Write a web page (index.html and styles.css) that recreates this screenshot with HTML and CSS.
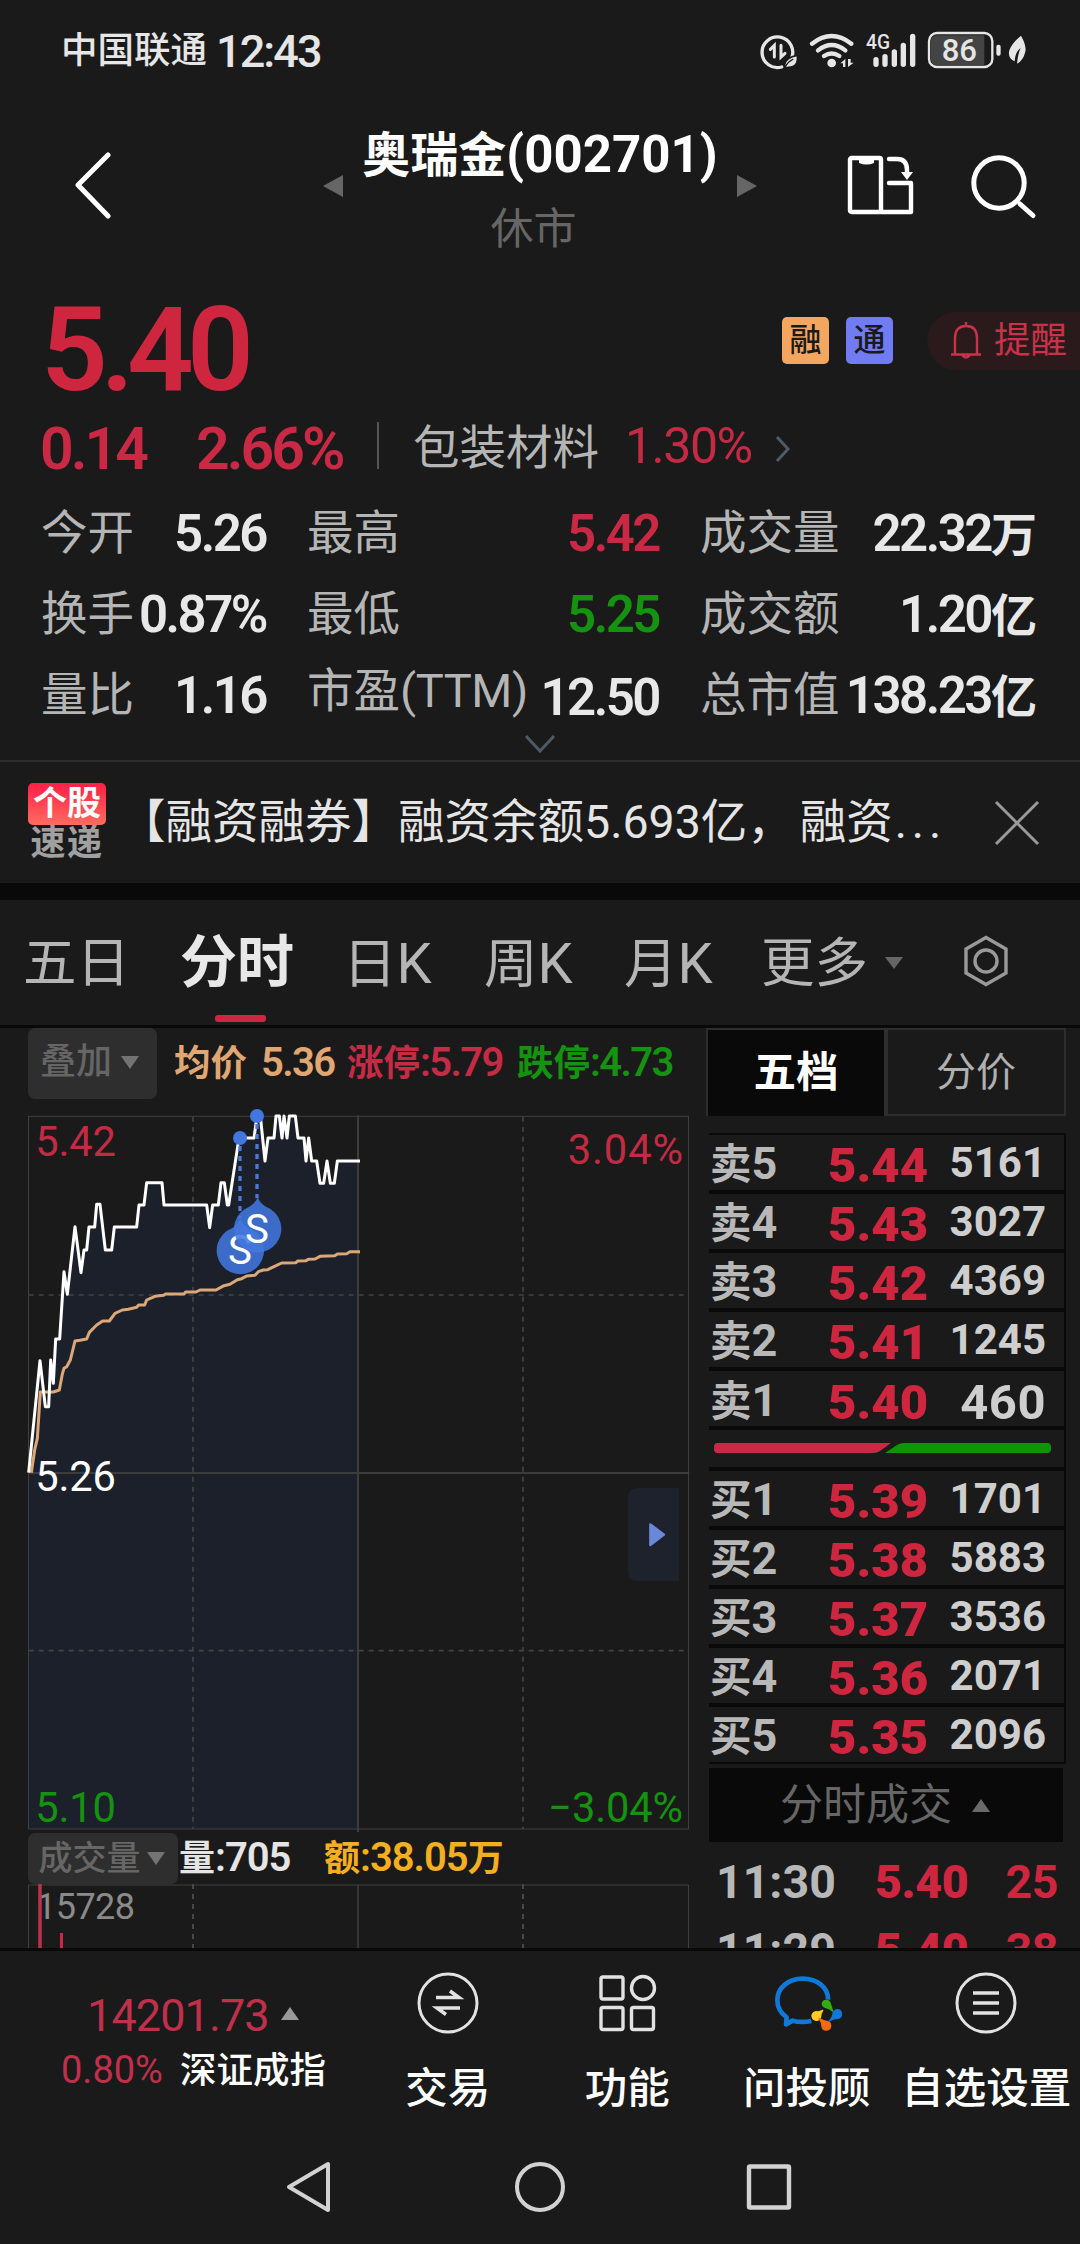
FILE: index.html
```html
<!DOCTYPE html>
<html lang="zh-CN">
<head>
<meta charset="utf-8">
<title>奥瑞金(002701)</title>
<link rel="stylesheet" href="styles.css">
</head>
<body>
<div class="statusbar">
  <span class="carrier">中国联通</span><span class="clock">12:43</span>
  <svg class="status-icons" width="270" height="44" viewBox="0 0 810 132">
    <g fill="none" stroke="#e6e6e6" stroke-width="10" stroke-linecap="round">
      <path d="M91 115A46 46 0 1 1 120 90" transform="translate(-14 -7)"/>
      <path d="M50 52L62 40V75M82 40V75L94 64" stroke-width="9" transform="translate(-7 3)"/>
    </g>
    <path d="M124 73Q128 108 98 109Q84 112 86 101Q88 80 124 73Z" fill="#e6e6e6" stroke="#1a1a1a" stroke-width="5"/>
    <path d="M88 107Q96 92 112 84" stroke="#1a1a1a" stroke-width="4" fill="none"/>
    <g fill="none" stroke="#e6e6e6" stroke-width="13" stroke-linecap="round">
      <path d="M168 38Q227 -8 286 38"/><path d="M186 58Q227 26 268 58"/><path d="M204 75Q227 60 250 75"/>
    </g>
    <circle cx="227" cy="96" r="13" fill="#e6e6e6"/>
    <path d="M253 97L268 84V108H261V97ZM276 84V108L293 95H284V84Z" fill="#e6e6e6"/>
    <text x="330" y="55" class="net" textLength="72" lengthAdjust="spacingAndGlyphs">4G</text>
    <g stroke="#e6e6e6" stroke-width="16" stroke-linecap="round">
      <path d="M360 86V100M387 77V100M415 63V100M442 43V100M470 16V100"/>
    </g>
    <rect x="519" y="6" width="190" height="102" rx="24" fill="#1a1a1a" stroke="#e6e6e6" stroke-width="7"/>
    <path d="M543 13H685V102H543Q525 102 525 84V31Q525 13 543 13Z" fill="#444"/>
    <text x="557" y="91" class="batt" textLength="106" lengthAdjust="spacingAndGlyphs">86</text>
    <rect x="721" y="41" width="13" height="33" rx="6" fill="#e6e6e6"/>
    <path d="M795 14Q812 44 808 62Q802 88 783 98Q786 68 794 50Q777 64 776 91Q754 82 760 58Q768 36 795 14Z" fill="#e6e6e6"/>
  </svg>
</div>

<header class="header">
  <svg class="back" width="40" height="68" viewBox="0 0 40 68"><path d="M35 4L5 34L35 65" fill="none" stroke="#fff" stroke-width="5" stroke-linecap="round" stroke-linejoin="round"/></svg>
  <i class="tri tri-left"></i>
  <div class="title">
    <h1>奥瑞金<span>(002701)</span></h1>
    <p>休市</p>
  </div>
  <i class="tri tri-right"></i>
  <svg class="fold" width="67" height="61" viewBox="0 0 67 61">
    <g fill="none" stroke="#fff" stroke-width="4.400" stroke-linejoin="round" stroke-linecap="round">
      <rect x="3" y="3" width="31" height="54" rx="1.500"/><path d="M42 28H64V57H34M42 4H50Q60 4 60 15V20"/>
    </g>
    <path d="M12 3H27V8Q19.500 11 12 8ZM54 17H66L60 25Z" fill="#fff"/>
  </svg>
  <svg class="search" width="66" height="66" viewBox="0 0 66 66"><g fill="none" stroke="#fff" stroke-width="5" stroke-linecap="round"><circle cx="28" cy="29" r="25.200"/><path d="M49 50L62 61.500"/></g></svg>
</header>

<section class="price">
  <strong>5.40</strong>
  <b class="tag tag-r">融</b><b class="tag tag-t">通</b>
  <div class="alert">
    <svg width="30" height="38" viewBox="0 0 30 38"><g fill="none" stroke="#c93248" stroke-width="2.400"><path d="M4 32V16Q4 4 15 4Q26 4 26 16V32M0 32.500H30M15 0V4M11 33Q15 38 19 33"/></g></svg>
    <span>提醒</span>
  </div>
</section>

<section class="change">
  <b class="chg">0.14</b><b class="pct">2.66%</b><i class="bar"></i>
  <span class="sector">包装材料</span><span class="sector-pct">1.30%</span>
  <svg width="18" height="30" viewBox="0 0 18 30"><path d="M3 3L14 15L3 27" fill="none" stroke="#4e5a66" stroke-width="3"/></svg>
</section>

<section class="stats">
  <div><span>今开</span><b>5.26</b></div>
  <div><span>最高</span><b class="up">5.42</b></div>
  <div><span>成交量</span><b>22.32<em>万</em></b></div>
  <div><span>换手</span><b>0.87%</b></div>
  <div><span>最低</span><b class="down">5.25</b></div>
  <div><span>成交额</span><b>1.20<em>亿</em></b></div>
  <div><span>量比</span><b>1.16</b></div>
  <div class="pe"><span>市盈<u>(TTM)</u></span><b>12.50</b></div>
  <div><span>总市值</span><b>138.23<em>亿</em></b></div>
</section>
<div class="expand"><svg width="32" height="20" viewBox="0 0 32 20"><path d="M2 2L16 17L30 2" fill="none" stroke="#4e5a66" stroke-width="3"/></svg></div>

<section class="news">
  <div class="badge"><b>个股</b><i>速递</i></div>
  <p>【融资融券】融资余额5.693亿，<u>融资</u><span>...</span></p>
  <svg width="46" height="46" viewBox="0 0 46 46"><path d="M2 2L44 44M44 2L2 44" stroke="#999" stroke-width="3" fill="none"/></svg>
</section>
<div class="band"></div>

<nav class="periods">
  <span>五日</span><b>分时</b><span class="day">日<u>K</u></span><span class="week">周<u>K</u></span><span class="month">月<u>K</u></span><span class="more">更多</span>
  <i></i>
  <svg width="44" height="52" viewBox="0 0 44 52"><g fill="none" stroke="#999" stroke-width="3.400"><path d="M22 2.500L42 14V38L22 49.500L2 38V14Z"/><circle cx="22" cy="26" r="11"/></g></svg>
</nav>

<main class="main">
  <div class="charts">
    <div class="legend">
      <button class="pill">叠加<i></i></button>
      <span class="avg">均价<u>5.36</u></span><span class="limit-up">涨停<u>:5.79</u></span><span class="limit-down">跌停<u>:4.73</u></span>
    </div>
    <svg class="trend" width="700" height="732" viewBox="0 240 2100 2196">
      <path class="fill" d="M86 1358 120 1022 136 1160H146L152 1020 160 1090 167 957H179L192 755 202 823 225 620 243 758 252 690H260L267 621H284L290 553H300L316 690H335L343 621H410L417 555H432L440 488H486L492 555H620L629 623 638 555H655L663 488H673L682 555H686L717 354H762L771 288H781L795 423 804 354H822L828 288H838L846 354 852 288 861 354 868 288H886L894 354H912L918 423 926 354 935 423H950L960 490H971L981 423 991 490H1003L1012 423H1074V2428H86Z"/>
      <path class="dash" d="M579 290V2428M1569 290V2428M86 825H2065M86 1892H2065"/>
      <path class="solid" d="M1074 286V2436M86 1359H2068"/>
      <rect class="frame" x="85.500" y="289" width="1980" height="2138"/>
      <polyline class="avg-line" points="94,1358 104,1290 112,1255 121,1116 160,1116 178,1110 187,1062 192,1045 200,1040 211,1020 225,963 240,961 260,957 268,937 290,915 308,903 328,903 345,880 367,870 385,868 410,862 416,855 434,855 440,840 465,829 490,826 497,822 552,822 557,816 588,816 600,810 648,810 672,797 690,793 712,779 725,776 740,768 765,766 775,755 790,750 803,749 822,740 845,729 888,728 893,723 918,722 925,718 945,717 960,709 1004,707 1012,702 1040,701 1050,695 1080,695"/>
      <polyline class="price-line" points="86,1358 120,1022 136,1160 146,1160 152,1020 160,1090 167,957 179,957 192,755 202,823 225,620 243,758 252,690 260,690 267,621 284,621 290,553 300,553 316,690 335,690 343,621 410,621 417,555 432,555 440,488 486,488 492,555 620,555 629,623 638,555 655,555 663,488 673,488 682,555 686,555 717,354 762,354 771,288 781,288 795,423 804,354 822,354 828,288 838,288 846,354 852,288 861,354 868,288 886,288 894,354 912,354 918,423 926,354 935,423 950,423 960,490 971,490 981,423 991,490 1003,490 1012,423 1080,423"/>
      <path class="drop" d="M720 378V595M771 312V535"/>
      <g class="mark"><circle cx="720" cy="354" r="21"/><circle cx="771" cy="288" r="21"/></g>
      <g class="balloon">
        <path d="M721 598Q732 618 746 625A71 71 0 1 1 696 625Q710 618 721 598Z"/><text x="684" y="733">S</text>
        <path d="M773 533Q784 553 798 560A71 71 0 1 1 748 560Q762 553 773 533Z"/><text x="735" y="668">S</text>
      </g>
      <text class="lab up" x="106" y="407" textLength="242">5.42</text>
      <text class="lab" x="106" y="1412" textLength="242">5.26</text>
      <text class="lab down" x="106" y="2405" textLength="242">5.10</text>
      <text class="lab up" x="1703" y="433" textLength="346">3.04%</text>
      <text class="lab down" x="1645" y="2405" textLength="404">−3.04%</text>
      <path d="M1914 1404H2037V1683H1914Q1884 1683 1884 1653V1434Q1884 1404 1914 1404Z" fill="#1e222c"/>
      <path d="M1951 1513L1992 1544 1951 1575Z" fill="#6b87d8" stroke="#6b87d8" stroke-width="7" stroke-linejoin="round"/>
    </svg>
    <div class="vol-head"><button class="pill">成交量<i></i></button><span class="vol">量<u>:705</u></span><span class="amt">额<u>:38.05</u>万</span></div>
    <svg class="volume" width="700" height="64" viewBox="0 0 700 64">
      <path d="M28.500 64V1H688.500V64" fill="none" stroke="#404040"/><path d="M358 0V64" stroke="#353535" stroke-width="2"/>
      <path d="M193 0V64M523 0V64" stroke="#484848" stroke-width="2" stroke-dasharray="5 5"/>
      <text x="36" y="35" textLength="99">15728</text>
      <path d="M40 0V64" stroke="#b8334a" stroke-width="3.600"/><path d="M61.500 49V64" stroke="#c92944" stroke-width="3"/>
    </svg>
  </div>

  <aside class="book">
    <div class="book-tabs"><b>五档</b><span>分价</span></div>
    <div class="levels">
      <div><span>卖<u>5</u></span><b>5.44</b><em>5161</em></div>
      <div><span>卖<u>4</u></span><b>5.43</b><em>3027</em></div>
      <div><span>卖<u>3</u></span><b>5.42</b><em>4369</em></div>
      <div><span>卖<u>2</u></span><b>5.41</b><em>1245</em></div>
      <div><span>卖<u>1</u></span><b>5.40</b><em class="short">460</em></div>
      <svg class="ratio" width="355" height="37" viewBox="0 0 355 37">
        <path d="M8.500 13H182L171 21Q168 23 164 23H8.500Q5 23 5 19V17Q5 13 8.500 13Z" fill="#c92944"/>
        <path d="M176 23L188 15Q191 13 195 13H338Q342 13 342 17V19Q342 23 338 23Z" fill="#0c9605"/>
      </svg>
      <div><span>买<u>1</u></span><b>5.39</b><em>1701</em></div>
      <div><span>买<u>2</u></span><b>5.38</b><em>5883</em></div>
      <div><span>买<u>3</u></span><b>5.37</b><em>3536</em></div>
      <div><span>买<u>4</u></span><b>5.36</b><em>2071</em></div>
      <div><span>买<u>5</u></span><b>5.35</b><em>2096</em></div>
    </div>
    <div class="ticks-head">分时成交<i></i></div>
    <div class="ticks">
      <div><span>11:30</span><b>5.40</b><em>25</em></div>
      <div><span>11:29</span><b>5.40</b><em>38</em></div>
    </div>
  </aside>
</main>

<nav class="bottom">
  <div class="index">
    <p class="idx-val">14201.73<i></i></p>
    <p class="idx-name"><span>0.80%</span>深证成指</p>
  </div>
  <div class="item">
    <svg width="64" height="64" viewBox="0 0 64 64"><g fill="none" stroke="#e2e2e2"><circle cx="32" cy="32" r="29" stroke-width="3"/><path d="M20 26.500H43L34 20M44 37H21L30 43.500" stroke-width="3.500"/></g></svg>
    <span>交易</span>
  </div>
  <div class="item">
    <svg width="64" height="64" viewBox="0 0 64 64"><g fill="none" stroke="#e2e2e2" stroke-width="3.400"><rect x="6" y="6" width="22" height="22" rx="2"/><circle cx="48" cy="17" r="11.500"/><rect x="6" y="36.500" width="22" height="22" rx="2"/><rect x="36.500" y="36.500" width="22" height="22" rx="2"/></g></svg>
    <span>功能</span>
  </div>
  <div class="item">
    <svg width="70" height="64" viewBox="0 0 210 192">
      <path d="M168 86C170 50 135 23 92 23C48 23 16 51 16 88C16 110 27 127 44 139L42 160L62 149Q88 156 118 150" fill="none" stroke="#1079d8" stroke-width="14" stroke-linejoin="round"/>
      <g stroke-width="4" stroke-linejoin="round">
        <path d="M151 97A12 12 0 0 1 174 96Q178 108 182 120Q172 112 160 109A12 12 0 0 1 151 97Z" fill="#34ad12" stroke="#34ad12"/>
        <path d="M152 118Q145 130 146 136A13 13 0 1 1 132 122Q142 124 152 118Z" fill="#ffce1f" stroke="#ffce1f"/>
        <path d="M141 142Q154 150 164 151A13 13 0 1 1 150 166Q150 154 141 142Z" fill="#f26a12" stroke="#f26a12"/>
        <path d="M171 151Q180 144 183 130A13 13 0 1 1 196 142Q182 142 171 151Z" fill="#1079d8" stroke="#1079d8"/>
      </g>
    </svg>
    <span>问投顾</span>
  </div>
  <div class="item">
    <svg width="64" height="64" viewBox="0 0 64 64"><g fill="none" stroke="#e2e2e2"><circle cx="32" cy="32" r="29" stroke-width="3"/><path d="M19 22H45M19 32H45M19 42H45" stroke-width="3.500"/></g></svg>
    <span>自选设置</span>
  </div>
</nav>

<footer class="sysnav">
  <svg width="48" height="54" viewBox="0 0 48 54"><path d="M43 4V50L4 27Z" fill="none" stroke="#d2d2d2" stroke-width="4" stroke-linejoin="round"/></svg>
  <svg width="52" height="52" viewBox="0 0 52 52"><circle cx="26" cy="26" r="23" fill="none" stroke="#d2d2d2" stroke-width="4"/></svg>
  <svg width="46" height="48" viewBox="0 0 46 48"><rect x="3" y="3.500" width="40" height="41" rx="1" fill="none" stroke="#d2d2d2" stroke-width="4.400"/></svg>
</footer>
</body>
</html>
```
FILE: styles.css
```css
* { box-sizing: border-box; margin: 0; padding: 0; }
body {
  width: 1080px; height: 2244px; overflow: hidden;
  background: #1a1a1a; color: #e5e5e5;
  font-family: Roboto, "Noto Sans CJK SC", sans-serif;
  line-height: 1;
}
i, em { font-style: normal; }
u { text-decoration: none; }
span, b, strong, p, h1 { white-space: nowrap; }
svg { display: block; flex: none; }
button { border: 0; font: inherit; }

.statusbar { display: flex; align-items: center; height: 100px; padding: 2px 0 0 61px; color: #e6e6e6; }
.carrier { font-size: 36.500px; font-weight: 500; width: 155px; padding-top: 1px; }
.clock { font-size: 45px; font-weight: 500; letter-spacing: -1.900px; }
.status-icons { margin: 3px 54px 0 auto; }
.net { font-size: 58px; font-weight: 500; fill: #e6e6e6; }
.batt { font-size: 94px; font-weight: 500; fill: #e6e6e6; }

.header { display: flex; align-items: flex-start; height: 180px; padding-left: 73px; }
.back { margin-top: 51px; }
.tri { flex: none; border: solid transparent; border-width: 11px 0; margin-top: 75px; }
.tri-left { border-right: 20px solid #666; margin-left: 210px; }
.tri-right { border-left: 20px solid #666; }
.title { width: 394px; padding-top: 28px; text-align: center; }
.title h1 { font-size: 48px; font-weight: 700; color: #fff; line-height: 54px; }
.title h1 span { font-size: 51px; }
.title p { margin: 22px 13px 0 0; font-size: 43px; line-height: 48px; color: #666; }
.fold { margin: 55px 0 0 90px; }
.search { margin: 54px 0 0 57px; }

.price { display: flex; height: 125px; padding-left: 41px; }
.price strong { width: 741px; margin-top: 12px; font-size: 117px; font-weight: 600; line-height: 117px; letter-spacing: -7px; color: #cf2640; }
.tag { width: 47px; height: 47px; margin: 37px 17px 0 0; border-radius: 5px; font-size: 32px; font-weight: 500; line-height: 47px; text-align: center; color: #1a1a1a; }
.tag-r { background: #f3a65f; }
.tag-t { background: #727cf2; }
.alert { display: flex; align-items: center; width: 153px; height: 58px; margin: 32px 0 0 17px; padding-left: 24px; border-radius: 29px 0 0 29px; background: #2b1a1c; color: #c93248; }
.alert span { margin-left: 13px; font-size: 36.500px; }

.change { display: flex; align-items: center; height: 87px; padding-left: 40px; }
.chg, .pct { font-size: 59px; font-weight: 600; letter-spacing: -3px; color: #c92944; }
.chg { width: 156px; }
.pct { width: 181px; }
.bar { width: 2px; height: 47px; margin-top: -6px; background: #555; }
.sector { width: 212px; margin-left: 34px; font-size: 46.500px; color: #b5b5b5; }
.sector-pct { width: 149px; font-size: 50px; letter-spacing: -1.500px; color: #c32b45; margin-top: -6px; }

.stats { display: grid; grid-template-columns: 225px 352px 337px; grid-auto-rows: 81px; column-gap: 41px; padding-left: 41px; }
.stats div { display: flex; align-items: center; justify-content: space-between; padding-top: 2px; }
.stats span { font-size: 46.500px; color: #b5b5b5; }
.stats b { font-size: 51px; font-weight: 600; letter-spacing: -2.500px; color: #e8e8e8; }
.stats em { font-size: 46px; letter-spacing: 0; }
.stats .up { color: #c92944; }
.stats .down { color: #159210; }
.pe span { padding-bottom: 10px; }
.pe b { padding-top: 4px; }
.pe u { font-size: 47px; letter-spacing: -.400px; }
.expand { display: flex; justify-content: center; height: 27px; border-bottom: 2px solid #2c2c2c; }
.expand svg { margin-top: -1px; }

.news { display: flex; align-items: center; height: 121px; padding-left: 28px; }
.badge { display: flex; flex-direction: column; width: 78px; text-align: center; }
.badge b { height: 42px; border-radius: 5px; background: linear-gradient(#ff1f45, #ff6c60); color: #fff; font-size: 34px; line-height: 41px; }
.badge i { font-size: 35px; font-weight: 700; line-height: 38px; letter-spacing: 1.500px; color: #a0a0a0; }
.news p { width: 875px; margin-left: 13px; font-size: 46.500px; color: #e5e5e5; }
.news p u { margin-left: 6px; }
.news p span { margin-left: 2px; letter-spacing: 4.800px; }
.band { height: 17px; background: #090909; }

.periods { display: flex; align-items: center; height: 128px; padding-left: 23px; border-bottom: 3px solid #090909; color: #b5b5b5; font-size: 53.500px; }
.periods span { flex: none; width: 134px; padding-top: 2px; }
.periods b { position: relative; flex: none; width: 163px; margin-left: 23px; font-size: 57px; color: #e8e8e8; }
.periods b::after { content: ""; position: absolute; left: 35px; top: 81px; width: 51px; height: 7px; border-radius: 3px; background: #c92944; }
.periods u { font-size: 56px; }
.periods .day { width: 141px; }
.periods .week { width: 140px; }
.periods .month { width: 137px; }
.periods .more { width: 124px; }
.periods i { border: solid transparent; border-width: 0 9px; border-top: 12px solid #666; }
.periods svg { margin-left: 61px; margin-top: -3px; }

.main { display: grid; grid-template-columns: 706px 360px; height: 920px; overflow: hidden; }
.legend { display: flex; align-items: flex-start; height: 72px; padding-left: 28px; font-size: 36.500px; font-weight: 600; line-height: 70px; }
.legend u, .vol-head u { font-size: 40px; letter-spacing: -1.600px; }
.pill { display: flex; flex: none; align-items: center; justify-content: center; gap: 9px; border-radius: 7px; background: #2e2e2e; color: #666; font-weight: 500; }
.pill i { border: solid transparent; border-width: 0 9px; border-top: 13px solid #737373; }
.legend .pill { width: 129px; height: 71px; padding: 0 6px 3px 0; margin-right: 17px; font-size: 36px; }
.avg { width: 173px; color: #e0a772; }
.avg u { margin-left: 14px; }
.limit-up { width: 170px; color: #c52b45; }
.limit-down { color: #159210; }

.trend .fill { fill: #1c202b; }
.trend path.dash { fill: none; stroke: #444; stroke-width: 5; stroke-dasharray: 15 15; }
.trend path.solid { stroke: #3c3c3c; stroke-width: 6; }
.trend .frame { fill: none; stroke: #404040; stroke-width: 3; }
.trend polyline { fill: none; stroke-linejoin: round; stroke-width: 9; }
.price-line { stroke: #fff; }
.avg-line { stroke: #dca878; }
.drop { stroke: #4c79d8; stroke-width: 10; stroke-dasharray: 15 15; }
.mark { fill: #4377e0; }
.balloon path { fill: #4377e0; fill-opacity: .87; }
.balloon text { fill: #fff; font-size: 121px; }
.lab { fill: #fff; font-size: 125px; }
.lab.up { fill: #c32b45; }
.lab.down { fill: #159210; }

.vol-head { display: flex; align-items: center; height: 52px; padding-left: 28px; font-size: 36px; font-weight: 600; line-height: 52px; }
.vol-head u { letter-spacing: -1px; }
.vol-head .pill { width: 150px; height: 51px; padding-right: 3px; gap: 6px; font-size: 34px; }
.vol { width: 145px; margin-left: 1px; }
.amt { color: #f5ae20; }
.volume text { fill: #8a8a8a; font-size: 36px; }

.book-tabs { display: grid; grid-template-columns: 178px 1fr; height: 88px; border: 2px solid #2e2e2e; text-align: center; line-height: 86px; }
.book-tabs b { background: #090909; color: #fff; font-size: 42.500px; border-right: 2px solid #2e2e2e; }
.book-tabs span { border-left: 2px solid #2e2e2e; font-size: 40px; color: #b0b0b0; }
.levels { display: flex; flex-direction: column; gap: 4px; margin: 17px 0 0 3px; padding: 2px 2px 2px 0; background: #090909; }
.levels div, .ratio { background: #1a1a1a; }
.levels div { display: grid; grid-template-columns: 118px 1fr auto; align-items: center; height: 55px; padding: 0 18px 0 1px; font-weight: 700; }
.levels span { padding-top: 2px; font-size: 41.500px; color: #b8b8b8; }
.levels u { font-size: 45px; }
.levels b { padding-top: 6px; font-size: 49px; color: #cf2640; }
.levels em { padding-top: 1px; font-size: 42px; color: #cecece; }
.levels .short { font-size: 49px; letter-spacing: .500px; padding-top: 7px; }
.ticks-head { display: flex; align-items: center; height: 74px; margin: 4px 3px 0; padding-left: 71px; background: #090909; color: #666; font-size: 43px; }
.ticks-head i { margin-left: 20px; border: solid transparent; border-width: 0 9px; border-bottom: 13px solid #6a6a6a; }
.ticks { padding: 6px 8px 0 10px; }
.ticks div { display: grid; grid-template-columns: 159px 1fr auto; align-items: center; height: 68px; font-size: 46.500px; font-weight: 700; color: #b8b8b8; }
.ticks b, .ticks em { color: #cf2640; letter-spacing: -.400px; }

.bottom { display: flex; height: 164px; border-top: 3px solid #090909; }
.index { width: 358px; padding-left: 61px; }
.idx-val { display: flex; align-items: center; margin: 42px 0 0 26px; font-size: 45px; letter-spacing: -.900px; color: #c0304a; }
.idx-val i { margin: -4px 0 0 12px; border: solid transparent; border-width: 0 9px; border-bottom: 13px solid #999; }
.idx-name { margin-top: 8px; font-size: 36.500px; font-weight: 500; line-height: 48px; color: #fff; }
.idx-name span { display: inline-block; width: 119px; font-size: 38px; font-weight: 400; color: #c0304a; }
.item { display: flex; flex-direction: column; align-items: center; width: 179.500px; padding-top: 20px; }
.item span { margin-top: 25px; font-size: 42.500px; font-weight: 500; line-height: 58px; color: #fff; }
.sysnav { display: flex; align-items: center; justify-content: space-between; padding: 48px 288px 0 285px; }
```
